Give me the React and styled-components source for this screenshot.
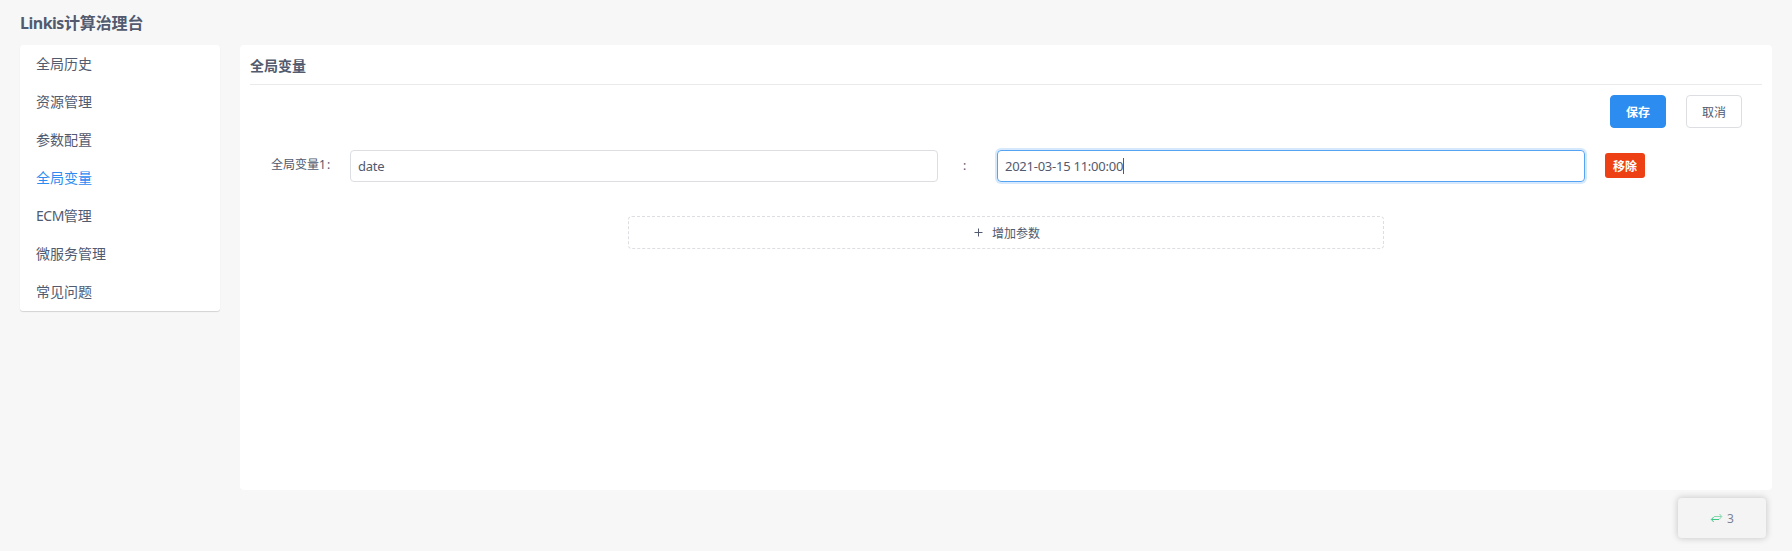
import React from 'react';
import styled, { createGlobalStyle } from 'styled-components';

const GlobalStyle = createGlobalStyle`
  * { box-sizing: border-box; }
  body {
    margin: 0;
    background: #f7f7f7;
    color: #515a6e;
    font-family: "Noto Sans", "Noto Sans CJK SC", sans-serif;
    font-size: 12px;
    line-height: 1.5;
  }
`;

const Page = styled.div`
  position: relative;
  height: 551px;
  padding: 0 20px;
  overflow: hidden;
`;

const PageTitle = styled.header`
  height: 45px;
  line-height: 46px;
  font-size: 16px;
  font-weight: 700;
  letter-spacing: -0.1px;
  white-space: nowrap;
`;

const Latin = styled.span`
  letter-spacing: -0.5px;
`;

const Columns = styled.div`
  display: flex;
  align-items: flex-start;
  gap: 20px;
`;

const Menu = styled.nav`
  width: 200px;
  background: #fff;
  border-radius: 3px;
  box-shadow: 0 1px 1px rgba(0, 0, 0, 0.15);
`;

const MenuItem = styled.div`
  height: 38px;
  padding: 0 16px;
  font-size: 14px;
  line-height: 38px;
  color: ${(p) => (p.$active ? '#2d8cf0' : '#515a6e')};
`;

const Panel = styled.main`
  flex: 1;
  height: 445px;
  padding: 0 10px;
  background: #fff;
  border-radius: 4px;
`;

const PanelTitle = styled.h2`
  height: 40px;
  margin: 0;
  border-bottom: 1px solid #e8eaec;
  font-size: 14px;
  font-weight: 700;
  line-height: 42px;
`;

const Actions = styled.div`
  display: flex;
  justify-content: flex-end;
  gap: 20px;
  padding: 10px 20px 0 0;
`;

const Button = styled.button`
  width: 56px;
  height: 33px;
  padding: 3px 0 0;
  border: 1px solid ${(p) => (p.$primary ? '#2d8cf0' : '#dcdee2')};
  border-radius: 4px;
  background: ${(p) => (p.$primary ? '#2d8cf0' : '#fff')};
  color: ${(p) => (p.$primary ? '#fff' : '#515a6e')};
  font: inherit;
  font-weight: ${(p) => (p.$primary ? 700 : 400)};
`;

const VariableRow = styled.div`
  display: flex;
  align-items: center;
  height: 32px;
  margin-top: 22px;
  padding-left: 21px;
`;

const Label = styled.label`
  width: 79px;
  padding-bottom: 2px;
  white-space: nowrap;
`;

const LabelColon = styled.span`
  margin-left: 1px;
`;

const Field = styled.div`
  display: flex;
  align-items: center;
  width: 588px;
  height: 32px;
  padding: 1px 7px 0;
  border: 1px solid ${(p) => (p.$focused ? '#57a3f3' : '#dcdee2')};
  border-radius: 4px;
  box-shadow: ${(p) => (p.$focused ? '0 0 0 2px rgba(45, 140, 240, 0.2)' : 'none')};
  font-size: 13px;
  letter-spacing: -0.25px;
`;

const Caret = styled.span`
  width: 1px;
  height: 16px;
  margin-bottom: 2px;
  background: #515a6e;
`;

const Separator = styled.span`
  width: 59px;
  padding-left: 25px;
`;

const RemoveButton = styled.button`
  width: 40px;
  height: 25px;
  margin: 0 0 1px 20px;
  padding: 2px 0 0;
  border: 0;
  border-radius: 3px;
  background: #ed4014;
  color: #fff;
  font: inherit;
  font-weight: 700;
`;

const AddButton = styled.button`
  display: flex;
  align-items: center;
  justify-content: center;
  gap: 9px;
  width: 756px;
  height: 33px;
  margin: 34px auto 0;
  padding: 3px 0 0 2px;
  border: 1px dashed #dcdee2;
  border-radius: 4px;
  background: #fff;
  color: #515a6e;
  font: inherit;
`;

const PlusIcon = styled.svg`
  width: 9px;
  height: 9px;
  margin-bottom: 3px;
`;

const StatusBadge = styled.aside`
  position: absolute;
  right: 26px;
  bottom: 13px;
  display: flex;
  align-items: center;
  justify-content: center;
  gap: 4px;
  width: 88px;
  height: 40px;
  padding-top: 1px;
  border-radius: 4px;
  background: #f4f4f4;
  box-shadow: 0 0 6px 1px rgba(0, 0, 0, 0.17);
  color: #7b8295;
`;

const SwapIcon = styled.svg`
  width: 13px;
  height: 10px;
  margin-bottom: 2px;
`;

const menuItems = ['全局历史', '资源管理', '参数配置', '全局变量', 'ECM管理', '微服务管理', '常见问题'];

export default function App() {
  return (
    <>
      <GlobalStyle />
      <Page>
        <PageTitle>
          <Latin>Linkis</Latin>计算治理台
        </PageTitle>
        <Columns>
          <Menu>
            {menuItems.map((item) => (
              <MenuItem key={item} $active={item === '全局变量'}>
                {item.startsWith('ECM') ? (
                  <>
                    <Latin>ECM</Latin>
                    {item.slice(3)}
                  </>
                ) : (
                  item
                )}
              </MenuItem>
            ))}
          </Menu>
          <Panel>
            <PanelTitle>全局变量</PanelTitle>
            <Actions>
              <Button $primary>保存</Button>
              <Button>取消</Button>
            </Actions>
            <VariableRow>
              <Label>
                全局变量1<LabelColon>:</LabelColon>
              </Label>
              <Field>date</Field>
              <Separator>:</Separator>
              <Field $focused>
                2021-03-15 11:00:00
                <Caret />
              </Field>
              <RemoveButton>移除</RemoveButton>
            </VariableRow>
            <AddButton>
              <PlusIcon viewBox="0 0 9 9" fill="none" stroke="currentColor">
                <path d="M4.5 0.5v8M0.5 4.5h8" />
              </PlusIcon>
              增加参数
            </AddButton>
          </Panel>
        </Columns>
        <StatusBadge>
          <SwapIcon viewBox="0 0 13 10" fill="none" strokeWidth="1">
            <path d="M4 3.5h7.5M9.5 1l2.3 2.5L9.5 6" stroke="#85d9ad" />
            <path d="M9 6.5H1.5M3.7 4L1.3 6.5L3.7 9" stroke="#3cc885" />
          </SwapIcon>
          3
        </StatusBadge>
      </Page>
    </>
  );
}
